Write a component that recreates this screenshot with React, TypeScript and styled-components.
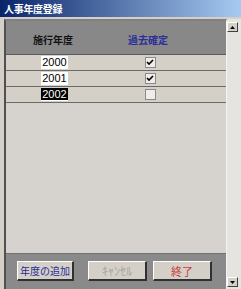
import React from "react";
import styled, { createGlobalStyle } from "styled-components";

const GlobalStyle = createGlobalStyle`
  html, body { margin: 0; padding: 0; background: #d4d0c8; }
  body { font-family: "Noto Sans CJK JP", "Liberation Sans", sans-serif; }
`;

const Window = styled.div`
  width: 241px;
  height: 289px;
  display: flex;
  flex-direction: column;
  background: #d4d0c8;
  overflow: hidden;
`;

const TitleBar = styled.div`
  height: 17px;
  flex-shrink: 0;
  display: flex;
  align-items: center;
  padding-left: 4px;
  background: linear-gradient(to right, #0a246a, #a6caf0);
  color: #fff;
  font-size: 10px;
  font-weight: bold;
  letter-spacing: -0.3px;
`;

const Body = styled.div`
  flex: 1;
  display: flex;
  padding: 2px 0 0 4px;
  min-height: 0;
`;

const Panel = styled.div`
  flex: 1;
  display: flex;
  flex-direction: column;
  border-left: 2px solid #505050;
  border-top: 2px solid #808080;
  border-right: 1px solid #f4f4f4;
  background: #d6d3ce;
`;

const Header = styled.div`
  height: 34px;
  display: grid;
  grid-template-columns: 94px 96px 1fr;
  align-items: center;
  padding-top: 4px;
  box-sizing: border-box;
  background: #888888;
  border-bottom: 1px solid #5a5a5a;
  font-size: 10px;
  font-weight: bold;
`;

const HeaderLabel = styled.div<{ $color: string }>`
  text-align: center;
  color: ${(p) => p.$color};
`;

const Row = styled.div`
  height: 15px;
  display: grid;
  grid-template-columns: 94px 96px 1fr;
  align-items: center;
  background: #d4d0c8;
  border-bottom: 1px solid #6a6a6a;
`;

const Cell = styled.div`
  display: flex;
  justify-content: center;
  align-items: center;
`;

const YearBox = styled.span<{ $selected?: boolean }>`
  display: inline-block;
  width: 27px;
  height: 13px;
  line-height: 13px;
  margin-left: 3px;
  text-align: center;
  font-family: "Liberation Sans", sans-serif;
  font-size: 11px;
  background: #fff;
  color: #000;

  span {
    padding: 0 1px;
    background: ${(p) => (p.$selected ? "#000" : "transparent")};
    color: ${(p) => (p.$selected ? "#fff" : "#000")};
  }
`;

const CheckBox = styled.div`
  width: 9px;
  height: 9px;
  border: 1px solid #8a8a8a;
  background: #eeedea;
  display: flex;
  align-items: center;
  justify-content: center;
  margin-left: 4px;
`;

const Filler = styled.div`
  flex: 1;
`;

const Footer = styled.div`
  height: 36px;
  flex-shrink: 0;
  display: flex;
  align-items: flex-start;
  padding: 7px 0 0 11px;
  box-sizing: border-box;
  background: #8a8a8a;
  border-top: 1px solid #707070;
`;

const Button = styled.div<{ $color: string; $gap: number; $size?: number; $width?: number }>`
  width: ${(p) => p.$width ?? 59}px;
  height: 20px;
  box-sizing: border-box;
  margin-left: ${(p) => p.$gap}px;
  display: flex;
  align-items: center;
  justify-content: center;
  background: #d4d0c8;
  border-top: 1px solid #ffffff;
  border-left: 1px solid #ffffff;
  border-right: 2px solid #303030;
  border-bottom: 2px solid #303030;
  color: ${(p) => p.$color};
  font-size: ${(p) => p.$size ?? 10}px;
`;

const ScrollBar = styled.div`
  width: 13px;
  flex-shrink: 0;
  display: flex;
  flex-direction: column;
  justify-content: space-between;
  padding: 3px 1px 2px 0;
  background: #e6e4e0;
`;

const ArrowButton = styled.div`
  width: 11px;
  height: 10px;
  box-sizing: border-box;
  display: flex;
  align-items: center;
  justify-content: center;
  background: #d4d0c8;
  border-top: 1px solid #fff;
  border-left: 1px solid #fff;
  border-right: 1px solid #404040;
  border-bottom: 1px solid #404040;
`;

const Check = () => (
  <svg width="8" height="7" viewBox="0 0 8 7">
    <path d="M1 3 L3 5 L7 1" stroke="#000" strokeWidth="1.6" fill="none" />
  </svg>
);

const Arrow = ({ up }: { up?: boolean }) => (
  <svg width="5" height="3" viewBox="0 0 5 3">
    <path d={up ? "M2.5 0 L5 3 L0 3 Z" : "M0 0 L5 0 L2.5 3 Z"} fill="#000" />
  </svg>
);

const rows = [
  { year: "2000", done: true },
  { year: "2001", done: true },
  { year: "2002", done: false, selected: true },
];

export default function App() {
  return (
    <>
      <GlobalStyle />
      <Window>
        <TitleBar>人事年度登録</TitleBar>
        <Body>
          <Panel>
            <Header>
              <HeaderLabel $color="#111">施行年度</HeaderLabel>
              <HeaderLabel $color="#2b2f9a">過去確定</HeaderLabel>
            </Header>
            {rows.map((r) => (
              <Row key={r.year}>
                <Cell>
                  <YearBox $selected={r.selected}>
                    <span>{r.year}</span>
                  </YearBox>
                </Cell>
                <Cell>
                  <CheckBox>{r.done && <Check />}</CheckBox>
                </Cell>
              </Row>
            ))}
            <Filler />
            <Footer>
              <Button $color="#2a2a96" $gap={0} $width={57}>
                年度の追加
              </Button>
              <Button $color="#a4a4a4" $gap={14} $size={12}>
                ｷｬﾝｾﾙ
              </Button>
              <Button $color="#c83c3c" $gap={6} $size={11}>
                終了
              </Button>
            </Footer>
          </Panel>
          <ScrollBar>
            <ArrowButton>
              <Arrow up />
            </ArrowButton>
            <ArrowButton>
              <Arrow />
            </ArrowButton>
          </ScrollBar>
        </Body>
      </Window>
    </>
  );
}
